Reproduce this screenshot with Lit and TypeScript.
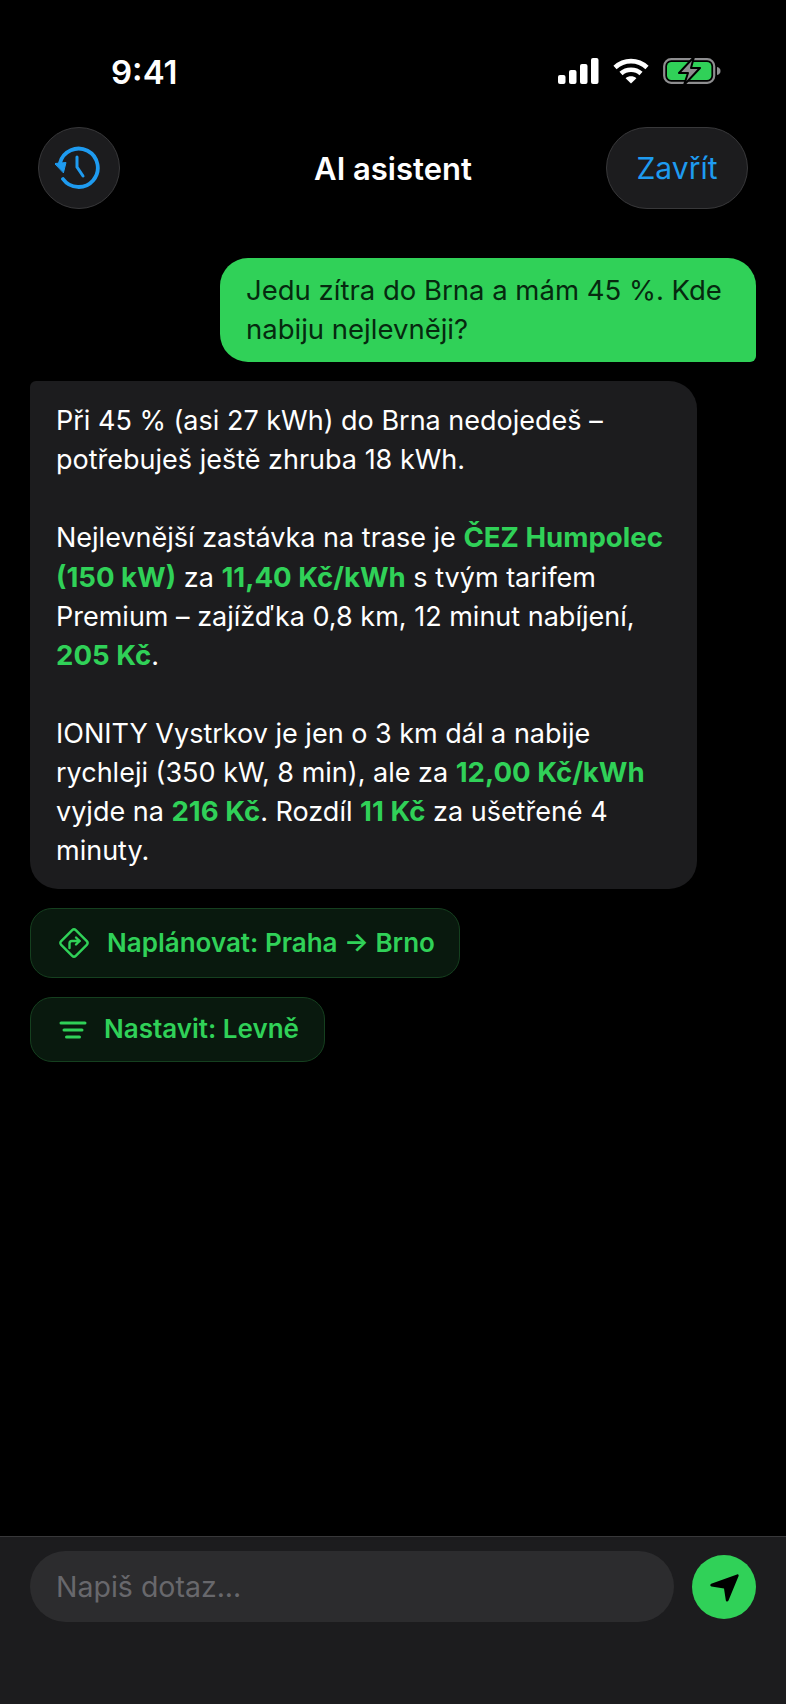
import { LitElement, html, css } from "lit";
import { customElement } from "lit/decorators.js";

@customElement("app-root")
export class AppRoot extends LitElement {
  static styles = css`
    :host {
      display: flex;
      flex-direction: column;
      height: 1704px;
      background: #000;
      color: #fff;
      font-family: "Inter", "Liberation Sans", sans-serif;
      overflow: hidden;
    }
    .status {
      height: 127px;
      flex: none;
      box-sizing: border-box;
      padding: 54px 65px 0 111px;
      display: flex;
      justify-content: space-between;
      align-items: flex-start;
    }
    .time {
      font-size: 33px;
      font-weight: 600;
      line-height: 36px;
    }
    .status-icons {
      display: flex;
      gap: 14px;
      margin-top: 4px;
    }
    .status-icons svg { display: block; }
    .header {
      flex: none;
      height: 82px;
      padding: 0 38px;
      display: grid;
      grid-template-columns: 1fr auto 1fr;
      align-items: center;
    }
    .round {
      box-sizing: border-box;
      height: 82px;
      background: #1c1c1e;
      border: 1.5px solid #38383a;
      border-radius: 41px;
      display: flex;
      align-items: center;
      justify-content: center;
    }
    .history { width: 82px; }
    .close {
      width: 142px;
      justify-self: end;
      color: #1e9bf0;
      font-size: 30px;
    }
    .title {
      font-size: 31px;
      font-weight: 600;
    }
    .chat {
      flex: 1;
      padding: 49px 30px 0;
      display: flex;
      flex-direction: column;
      align-items: flex-start;
    }
    .bubble {
      box-sizing: border-box;
      line-height: 39.1px;
    }
    .user {
      align-self: flex-end;
      width: 536px;
      padding: 13px 26px;
      background: #30d158;
      color: #06290f;
      font-size: 27.5px;
      border-radius: 28px 28px 6px 28px;
    }
    .bot {
      width: 667px;
      margin-top: 19px;
      padding: 20px 26px 19px;
      background: #1c1c1e;
      font-size: 27px;
      border-radius: 6px 28px 28px 28px;
    }
    .bot b {
      color: #30d158;
      font-size: 27.6px;
      font-weight: 700;
    }
    .action {
      box-sizing: border-box;
      display: flex;
      align-items: center;
      background: #09190e;
      border: 1.5px solid #15401f;
      border-radius: 22px;
      color: #30d158;
      font-size: 26px;
      font-weight: 600;
      padding-bottom: 2px;
    }
    .action svg { margin-top: 2px; }
    .plan {
      margin-top: 19px;
      height: 70px;
      width: 430px;
      padding-left: 27px;
      gap: 17px;
    }
    .set {
      margin-top: 19px;
      height: 65px;
      width: 295px;
      padding-left: 28px;
      gap: 17px;
    }
    .composer {
      flex: none;
      box-sizing: border-box;
      height: 168px;
      background: #1c1c1e;
      border-top: 1.5px solid #38383a;
      padding: 14px 30px 0;
      display: flex;
      align-items: flex-start;
      justify-content: space-between;
    }
    .input {
      box-sizing: border-box;
      width: 644px;
      height: 71px;
      border-radius: 36px;
      background: #2c2c2e;
      padding-left: 26px;
      display: flex;
      align-items: center;
      color: #68686c;
      font-size: 28.5px;
    }
    .send {
      width: 64px;
      height: 64px;
      margin-top: 4px;
      border-radius: 50%;
      background: #30d158;
      display: flex;
      align-items: center;
      justify-content: center;
    }
  `;

  private _statusIcons() {
    return html`
      <div class="status-icons">
        <svg width="41" height="26" viewBox="0 0 41 26" fill="#fff">
          <rect x="0" y="17" width="7.5" height="9" rx="2" />
          <rect x="11" y="12" width="7.5" height="14" rx="2" />
          <rect x="22" y="6" width="7.5" height="20" rx="2" />
          <rect x="33" y="0" width="7.5" height="26" rx="2" />
        </svg>
        <svg width="36" height="26" viewBox="0 0 36 26" fill="none" stroke="#fff" stroke-width="4.6">
          <path d="M2 9.5C11 1 25 1 34 9.5" />
          <path d="M8 15.5C13.5 10.5 22.5 10.5 28 15.5" />
          <path d="M18 25.5L12.6 20.2C15.6 17.6 20.4 17.6 23.4 20.2Z" fill="#fff" stroke="none" />
        </svg>
        <svg width="58" height="28" viewBox="0 0 58 28" style="margin-top:-1px">
          <rect x="1.2" y="2.2" width="50" height="23.6" rx="7" fill="none" stroke="#8e8e90" stroke-width="2.2" />
          <rect x="4" y="5" width="44.4" height="18" rx="4.5" fill="#30d158" />
          <path d="M54 10C56.4 10.6 57.5 12 57.5 14S56.4 17.4 54 18Z" fill="#8e8e90" />
          <path d="M31 0L16 16H25L21 28L37 11H28Z" fill="#8e8e90" stroke="#000" stroke-width="2" stroke-linejoin="round" />
        </svg>
      </div>
    `;
  }

  render() {
    return html`
      <div class="status">
        <div class="time">9:41</div>
        ${this._statusIcons()}
      </div>
      <div class="header">
        <div class="round history">
          <svg width="48" height="44" viewBox="0 1 48 44" fill="none" stroke="#1e9bf0" stroke-width="3.8" stroke-linecap="round">
            <path d="M5 18A19.2 19.2 0 1 1 8 34" />
            <path d="M0 18.5L11 17.5L8.5 27.5Z" fill="#1e9bf0" stroke="#1e9bf0" stroke-width="1" stroke-linejoin="round" />
            <path d="M22 12V22L28 31" stroke-width="3" />
          </svg>
        </div>
        <div class="title">AI asistent</div>
        <div class="round close">Zavřít</div>
      </div>
      <div class="chat">
        <div class="bubble user">Jedu zítra do Brna a mám 45 %. Kde nabiju nejlevněji?</div>
        <div class="bubble bot">
          Při 45 % (asi 27 kWh) do Brna nedojedeš –<br />
          potřebuješ ještě zhruba 18 kWh.<br /><br />
          Nejlevnější zastávka na trase je <b>ČEZ Humpolec</b><br />
          <b>(150 kW)</b> za <b>11,40 Kč/kWh</b> s tvým tarifem<br />
          Premium – zajížďka 0,8 km, 12 minut nabíjení,<br />
          <b>205 Kč</b>.<br /><br />
          IONITY Vystrkov je jen o 3 km dál a nabije<br />
          rychleji (350 kW, 8 min), ale za <b>12,00 Kč/kWh</b><br />
          vyjde na <b>216 Kč</b>. Rozdíl <b>11 Kč</b> za ušetřené 4<br />
          minuty.
        </div>
        <div class="action plan">
          <svg width="32" height="32" viewBox="0 0 32 32" fill="none" stroke="#30d158" stroke-width="2.4" stroke-linecap="round" stroke-linejoin="round">
            <path d="M14.2 3.2Q16 1.4 17.8 3.2L28.8 14.2Q30.6 16 28.8 17.8L17.8 28.8Q16 30.6 14.2 28.8L3.2 17.8Q1.4 16 3.2 14.2Z" />
            <path d="M11.5 21V16.5C11.5 15 12.5 14 14 14H21.5" />
            <path d="M18 10.5L21.5 14L18 17.5" />
          </svg>
          Naplánovat: Praha → Brno
        </div>
        <div class="action set">
          <svg width="28" height="18" viewBox="0 0 28 18" fill="none" stroke="#30d158" stroke-width="3" stroke-linecap="round">
            <path d="M2 2H26" />
            <path d="M5 9H23" />
            <path d="M7.5 16H20.5" />
          </svg>
          Nastavit: Levně
        </div>
      </div>
      <div class="composer">
        <div class="input">Napiš dotaz...</div>
        <div class="send">
          <svg width="32" height="32" viewBox="0 0 32 32">
            <path d="M29 3.5C30 2.8 31 3.8 30.6 5L20.5 29.5C19.8 31 18 30.8 17.8 29.2L16 17.5L3.5 15.4C2 15.1 1.8 13.4 3.2 12.7Z" fill="#000" />
          </svg>
        </div>
      </div>
    `;
  }
}
